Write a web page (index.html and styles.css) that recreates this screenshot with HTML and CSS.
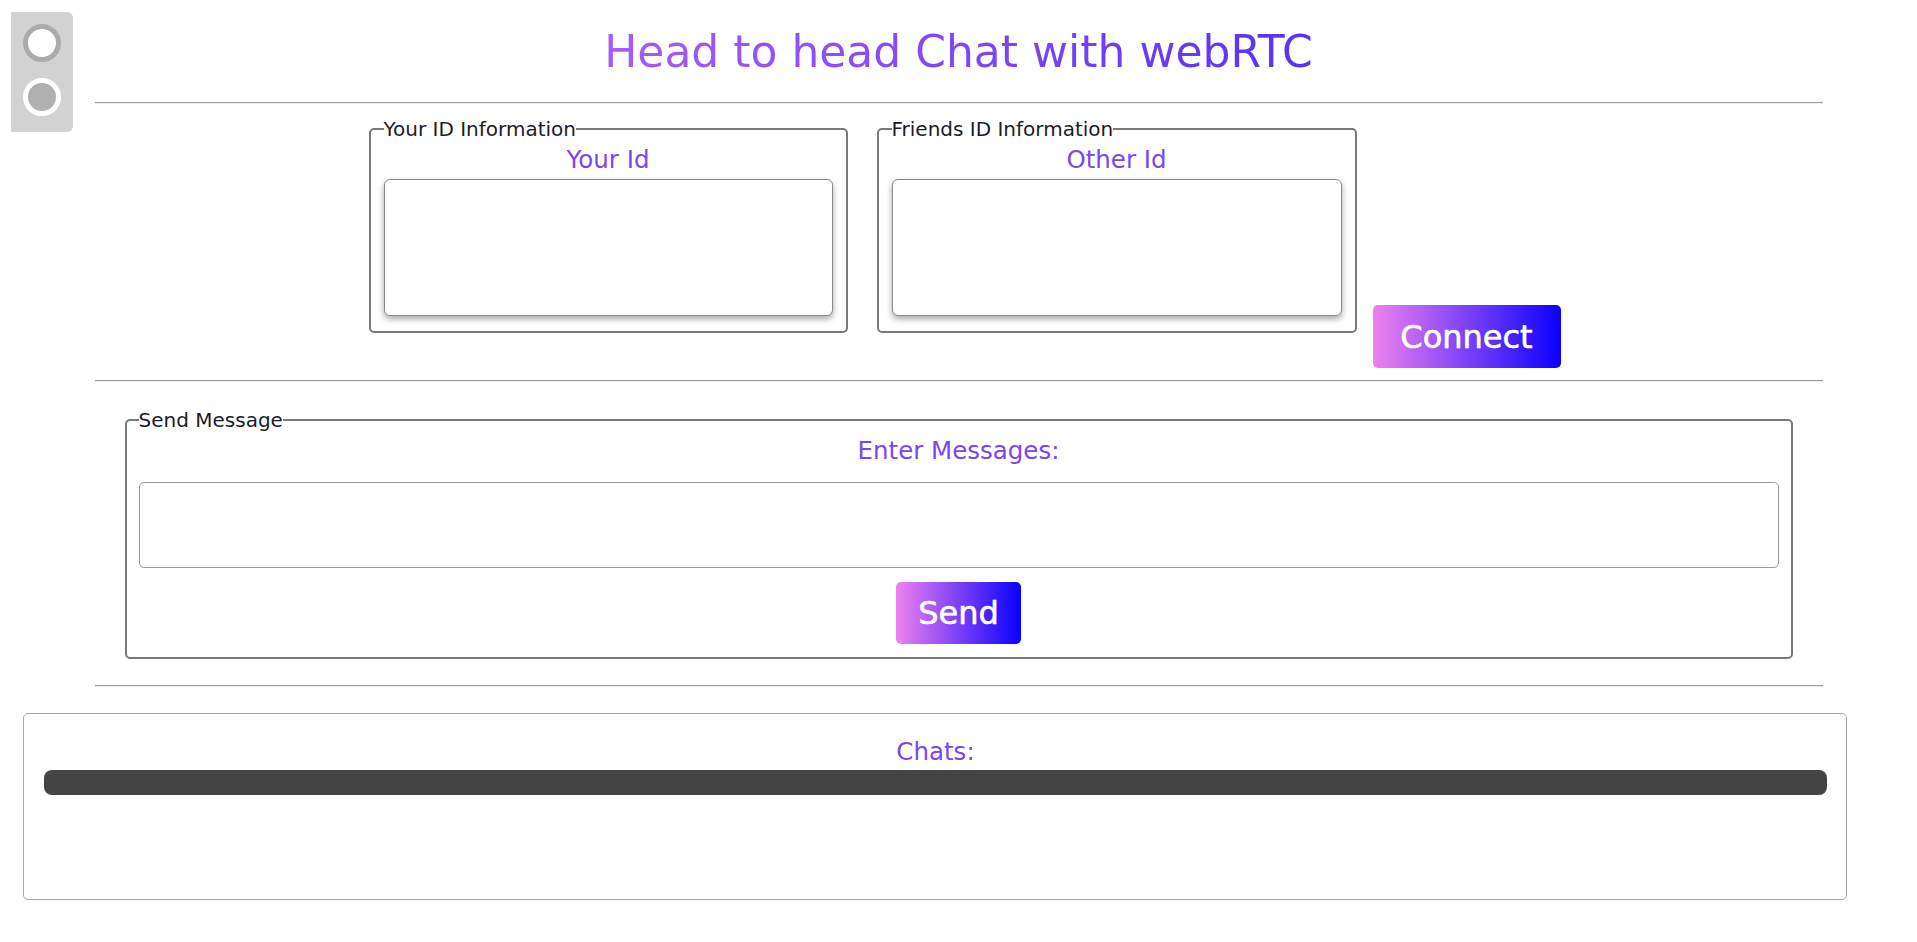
FILE: index.html
```html
<!DOCTYPE html>
<html lang="en">
<head>
<meta charset="utf-8">
<title>Head to head Chat with webRTC</title>
<link rel="stylesheet" href="styles.css">
</head>
<body>
  <div class="toggle">
    <span class="knob knob-on"></span>
    <span class="knob knob-off"></span>
  </div>

  <h1 class="title">Head to head Chat with webRTC</h1>
  <hr class="rule rule-top">

  <section class="id-row">
    <fieldset class="id-set">
      <legend class="legend">Your ID Information</legend>
      <div class="label">Your Id</div>
      <div class="id-box"></div>
    </fieldset>
    <fieldset class="id-set id-set-friend">
      <legend class="legend">Friends ID Information</legend>
      <div class="label">Other Id</div>
      <div class="id-box"></div>
    </fieldset>
    <button class="grad-btn btn-connect">Connect</button>
  </section>

  <hr class="rule rule-mid">

  <fieldset class="msg-set">
    <legend class="legend">Send Message</legend>
    <div class="label label-msg">Enter Messages:</div>
    <div class="msg-input"></div>
    <div class="send-wrap"><button class="grad-btn btn-send">Send</button></div>
  </fieldset>

  <hr class="rule rule-bottom">

  <section class="chats">
    <div class="label label-chats">Chats:</div>
    <div class="chat-bar"></div>
  </section>
</body>
</html>
```
FILE: styles.css
```css
body {
  margin: 0;
  font-family: "DejaVu Sans", Inter, sans-serif;
  color: #1c1c2a;
  background: #ffffff;
}

.toggle {
  position: absolute;
  left: 11px;
  top: 12px;
  width: 62px;
  height: 120px;
  background: #d2d2d2;
  border-radius: 0 6px 6px 0;
}
.knob {
  position: absolute;
  left: 12px;
  width: 28px;
  height: 28px;
  border-radius: 50%;
  border: 5px solid;
}
.knob-on {
  top: 12px;
  background: #ffffff;
  border-color: #ababab;
}
.knob-off {
  top: 66px;
  background: #b0b0b0;
  border-color: #ffffff;
}

.title {
  width: max-content;
  margin: 0 auto;
  padding-top: 23px;
  font-size: 44px;
  line-height: 58px;
  font-weight: 400;
  text-align: center;
  background: linear-gradient(90deg, #a65df5 0%, #5a32f4 100%);
  background-clip: text;
  -webkit-background-clip: text;
  color: transparent;
}

.rule {
  width: 1728px;
  height: 0;
  margin: 0 auto;
  border: none;
  border-top: 1px solid #9a9a9a;
  border-bottom: 1px solid #eeeeee;
}
.rule-top { margin-top: 21px; }
.rule-mid { margin-top: 12px; margin-bottom: 27px; }
.rule-bottom { margin-top: 26px; margin-bottom: 26px; }

.id-row {
  display: flex;
  justify-content: center;
  align-items: flex-end;
  padding-left: 12px;
  margin-top: 14px;
}

.legend {
  padding: 0;
  font-size: 20px;
  line-height: 22px;
  color: #1c1c2a;
}

.id-set {
  box-sizing: border-box;
  width: 479px;
  margin: 0 0 35px 0;
  padding: 6px 13px 15px;
  border: 2px solid #7a7a7a;
  border-radius: 5px;
}
.id-set-friend {
  width: 480px;
  margin-left: 29px;
}

.label {
  text-align: center;
  font-size: 24.5px;
  line-height: 28px;
  color: #7b45f3;
}

.id-box {
  margin-top: 5px;
  height: 135px;
  border: 1px solid #8a8a8a;
  border-radius: 6px;
  box-shadow: 0 3px 6px rgba(0, 0, 0, 0.35);
  background: #fff;
}

.grad-btn {
  border: none;
  border-radius: 5px;
  background: linear-gradient(90deg, #ee82ee 0%, #0a00ff 100%);
  color: #ffffff;
  font-family: "DejaVu Sans", Inter, sans-serif;
  font-size: 32px;
  font-weight: 400;
  -webkit-text-stroke: 0.6px #ffffff;
  padding: 0;
}
.btn-connect {
  width: 188px;
  height: 63px;
  margin-left: 16px;
}
.btn-send {
  width: 125px;
  height: 62px;
}

.msg-set {
  margin-left: calc((100% - 1728px) / 2 + 30px);
  margin-right: calc((100% - 1728px) / 2 + 30px);
  padding: 6px 12px 13px;
  border: 2px solid #7a7a7a;
  border-radius: 5px;
}
.label-msg {
  margin-bottom: 17px;
}
.msg-input {
  height: 84px;
  border: 1px solid #9a9a9a;
  border-radius: 5px;
}
.send-wrap {
  display: flex;
  justify-content: center;
  margin-top: 14px;
}

.chats {
  box-sizing: border-box;
  width: 1824px;
  height: 187px;
  margin-left: 23px;
  padding: 24px 19px 0 20px;
  border: 1px solid #a8a8a8;
  border-radius: 5px;
}
.label-chats {
  margin-bottom: 4px;
}
.chat-bar {
  height: 25px;
  border-radius: 8px;
  background: #444444;
}
```
